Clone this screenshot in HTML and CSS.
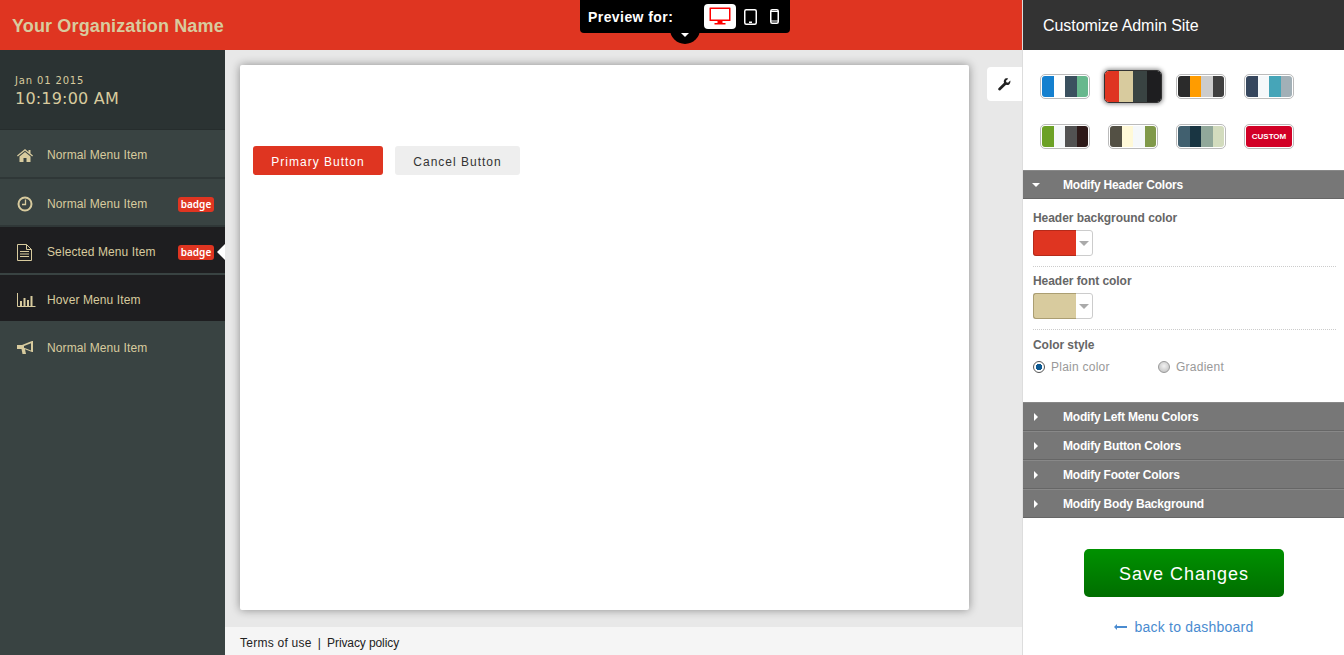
FILE: index.html
```html
<!DOCTYPE html>
<html lang="en">
<head>
<meta charset="utf-8">
<title>Customize Admin Site</title>
<link rel="stylesheet" href="styles.css">
</head>
<body>
<div class="app">
  <div class="main">
    <header class="topbar"><span class="org">Your Organization Name</span></header>
    <div class="preview">
      <span class="preview-label">Preview for:</span>
      <span class="device device-on">
        <svg width="22" height="20" viewBox="0 0 22 20"><path d="M1 1.500h20a.5.5 0 0 1 .5.5v12.500a.5.5 0 0 1-.5.5H1a.5.5 0 0 1-.5-.5V2a.5.5 0 0 1 .5-.5zM2 3v10.500h18V3z" fill="#f00" fill-rule="evenodd"/><path d="M8.500 15h5v2h3v1.500h-11V17h3z" fill="#f00"/></svg>
      </span>
      <span class="device device-tablet">
        <svg width="13" height="16" viewBox="0 0 13 16"><rect x=".75" y=".75" width="11.500" height="14.500" rx="1.500" fill="none" stroke="#fff" stroke-width="1.500"/><rect x="5" y="12.500" width="3" height="1.500" fill="#fff"/></svg>
      </span>
      <span class="device device-phone">
        <svg width="9" height="15" viewBox="0 0 9 15"><rect x=".75" y=".75" width="7.500" height="13.500" rx="1.500" fill="none" stroke="#fff" stroke-width="1.500"/><rect x="1" y="2" width="7" height="1" fill="#fff"/><rect x="1" y="11.500" width="7" height="1" fill="#fff"/></svg>
      </span>
      <span class="preview-tab"><span class="tab-caret"></span></span>
    </div>
    <div class="body-row">
      <aside class="sidebar">
        <div class="clock">
          <div class="clock-date">Jan 01 2015</div>
          <div class="clock-time">10:19:00 AM</div>
        </div>
        <nav class="menu">
          <a class="item">
            <svg class="ico" width="16" height="13" viewBox="0 0 16 13"><path d="M8 0 0 6.500l.8 1L8 1.800l7.200 5.700.8-1-2.500-2V1h-2v2z" fill="#d8cb9e"/><path d="M8 3 2.500 7.500V13H6.500V9h3v4h4V7.500z" fill="#d8cb9e"/></svg>
            <span class="label">Normal Menu Item</span>
          </a>
          <a class="item">
            <svg class="ico" width="16" height="16" viewBox="0 0 16 16"><circle cx="8" cy="8" r="6.500" fill="none" stroke="#d8cb9e" stroke-width="2"/><path d="M8.500 3.500v5H5" fill="none" stroke="#d8cb9e" stroke-width="1.300"/></svg>
            <span class="label">Normal Menu Item</span>
            <span class="badge">badge</span>
          </a>
          <a class="item item-dark item-selected">
            <svg class="ico" width="15" height="17" viewBox="0 0 15 17"><path d="M.5.500h9l5 5v11H.5z" fill="none" stroke="#d8cb9e"/><path d="M9.500.500v5h5" fill="none" stroke="#d8cb9e"/><path d="M3 7.500h9M3 10h9M3 12.500h9" stroke="#d8cb9e" stroke-width="1.200"/></svg>
            <span class="label">Selected Menu Item</span>
            <span class="badge">badge</span>
          </a>
          <a class="item item-dark">
            <svg class="ico" width="19" height="14" viewBox="0 0 19 14"><path d="M.5 0v13.500H18.500" fill="none" stroke="#d8cb9e"/><path d="M3 8h2v5H3zM6.500 5h2v8h-2zM10 7h2v6h-2zM13.500 3h2v10h-2z" fill="#d8cb9e"/></svg>
            <span class="label">Hover Menu Item</span>
          </a>
          <a class="item item-last">
            <svg class="ico" width="17" height="14" viewBox="0 0 17 14"><path d="M0 4h5l10-4h1v11h-1L8 8.300l1 4.700H5.500L4.500 8H0z" fill="#d8cb9e"/><path d="M14 2.200 7 5v1.800l7 2.600z" fill="#394342"/></svg>
            <span class="label">Normal Menu Item</span>
          </a>
        </nav>
      </aside>
      <main class="content">
        <div class="content-row">
          <section class="page">
            <button class="btn btn-primary">Primary Button</button>
            <button class="btn btn-cancel">Cancel Button</button>
          </section>
          <div class="wrench">
            <svg width="13" height="13" viewBox="0 0 14 14"><path d="M13.200 2.800 10.800 5 9 4.600 8.600 3 11 .7C9.300 0 7.700.500 7 1.500 6.200 2.500 6 3.800 6.500 5L.8 10.800c-.8.800-.8 1.500-.2 2.200.7.600 1.500.600 2.200-.1L8.700 7.300c1.200.4 2.500.2 3.600-.7 1-1 1.300-2.500.9-3.800z" fill="#222"/></svg>
          </div>
        </div>
        <footer class="footer"><a class="foot-link">Terms of use</a><span class="foot-sep">|</span><a class="foot-link foot-privacy">Privacy policy</a></footer>
      </main>
    </div>
  </div>
  <aside class="panel">
    <div class="panel-head">Customize Admin Site</div>
    <div class="swatches">
      <span class="swatch"><i style="background:#1580cf"></i><i style="background:#fff"></i><i style="background:#3b515f"></i><i style="background:#67b88d"></i></span>
      <span class="swatch swatch-on"><i style="background:#df3521"></i><i style="background:#d8cb9e"></i><i style="background:#394342"></i><i style="background:#1e1e20"></i></span>
      <span class="swatch"><i style="background:#2b2b2b"></i><i style="background:#ff9c00"></i><i style="background:#cccccc"></i><i style="background:#404040"></i></span>
      <span class="swatch"><i style="background:#36475e"></i><i style="background:#f5f8fa"></i><i style="background:#46a5b8"></i><i style="background:#a2b0b7"></i></span>
      <span class="swatch"><i style="background:#6ca126"></i><i style="background:#f5f8fa"></i><i style="background:#525252"></i><i style="background:#2e1a19"></i></span>
      <span class="swatch"><i style="background:#535044"></i><i style="background:#fff9d8"></i><i style="background:#f5f8fa"></i><i style="background:#80994a"></i></span>
      <span class="swatch"><i style="background:#41606f"></i><i style="background:#193542"></i><i style="background:#91a89a"></i><i style="background:#d3dcbe"></i></span>
      <span class="swatch swatch-custom"><b class="custom-text">CUSTOM</b></span>
    </div>
    <div class="acc"><span class="caret-down"></span><span class="acc-title">Modify Header Colors</span></div>
    <div class="acc-body">
      <div class="field field-line">
        <div class="field-label">Header background color</div>
        <div class="picker"><span class="picker-color picker-red"></span><span class="picker-arrow"></span></div>
      </div>
      <div class="field field-line">
        <div class="field-label">Header font color</div>
        <div class="picker"><span class="picker-color picker-tan"></span><span class="picker-arrow"></span></div>
      </div>
      <div class="field">
        <div class="field-label">Color style</div>
        <div class="radios">
          <span class="radio-wrap radio-first"><span class="radio radio-on"></span>Plain color</span>
          <span class="radio-wrap"><span class="radio"></span>Gradient</span>
        </div>
      </div>
    </div>
    <div class="acc"><span class="caret-right"></span><span class="acc-title">Modify Left Menu Colors</span></div>
    <div class="acc"><span class="caret-right"></span><span class="acc-title">Modify Button Colors</span></div>
    <div class="acc"><span class="caret-right"></span><span class="acc-title">Modify Footer Colors</span></div>
    <div class="acc"><span class="caret-right"></span><span class="acc-title">Modify Body Background</span></div>
    <div class="panel-foot">
      <button class="save">Save Changes</button>
      <a class="back"><span class="back-arrow"></span>back to dashboard</a>
    </div>
  </aside>
</div>
</body>
</html>
```
FILE: styles.css
```css
* { box-sizing: border-box; }
html, body { margin: 0; height: 100%; overflow: hidden; }
body { font-family: "Liberation Sans", Arial, sans-serif; background: #fff; }
.app { display: flex; height: 655px; width: 1344px; }
.main { width: 1022px; flex: none; display: flex; flex-direction: column; position: relative; }
.topbar { height: 50px; background: #df3521; display: flex; align-items: center; padding: 2px 0 0 12px; flex: none; }
.org { font-size: 18px; font-weight: 700; color: #d8cb9e; letter-spacing: .14px; }

.preview { position: absolute; left: 580px; top: 0; width: 210px; height: 33px; background: #000; border-radius: 0 0 4px 4px; display: flex; align-items: center; padding: 0 0 0 8px; z-index: 3; }
.preview-label { color: #fff; font-size: 14px; font-weight: 700; width: 116px; letter-spacing: .43px; white-space: nowrap; }
.device { display: flex; align-items: center; justify-content: center; }
.device-on { width: 32px; height: 25px; background: #fff; border-radius: 4px; margin-top: -1px; }
.device-tablet { width: 13px; margin-left: 8px; }
.device-phone { width: 9px; margin-left: 13px; }
.preview-tab { position: absolute; left: 90px; top: 20px; width: 30px; height: 24px; background: #000; border-radius: 0 0 15px 15px; z-index: -1; }
.tab-caret { position: absolute; left: 11px; top: 13px; border: 4px solid transparent; border-top-color: #fff; border-bottom: 0; }

.body-row { flex: 1; display: flex; min-height: 0; }
.sidebar { width: 225px; background: #394342; flex: none; }
.clock { height: 80px; background: #2b3333; border-bottom: 1px solid #262d2d; padding: 25px 0 0 15px; color: #d8cb9e; font-family: "DejaVu Sans", Verdana, sans-serif; }
.clock-date { font-size: 10px; line-height: 12px; letter-spacing: .85px; }
.clock-time { font-size: 16px; line-height: 20px; margin-top: 2px; letter-spacing: .2px; }
.menu { display: flex; flex-direction: column; }
.item { height: 48px; display: flex; align-items: center; padding: 4px 11px 0 0; position: relative; border-bottom: 2px solid #2f3737; color: #d8cb9e; font-size: 12px; letter-spacing: .1px; }
.item:first-child { height: 49px; padding-top: 3px; }
.item-dark { background: #1e1e20; border-bottom-color: #394342; }
.item-last { border-bottom-color: transparent; }
.item-selected::after { content: ""; position: absolute; right: 0; top: 17px; border: 8px solid transparent; border-right-color: #fff; border-left: 0; }
.ico { position: absolute; left: 17px; }
.label { margin-left: 47px; }
.badge { margin-left: auto; margin-top: 1px; background: #df3521; color: #fff; font-family: "Noto Sans", Verdana, sans-serif; font-size: 10px; font-weight: 600; line-height: 15px; height: 15px; width: 36px; text-align: center; border-radius: 3px; letter-spacing: 0; }

.content { flex: 1; display: flex; flex-direction: column; background: #e8e8e8; min-width: 0; }
.content-row { flex: 1; display: flex; align-items: flex-start; padding: 15px 0 0 15px; }
.page { width: 729px; height: 545px; background: #fff; box-shadow: 0 0 10px rgba(0,0,0,.4); border-radius: 2px; padding: 81px 0 0 13px; display: flex; align-items: flex-start; gap: 12px; flex: none; }
.btn { height: 29px; border: 0; border-radius: 3px; font-family: "Liberation Sans", Arial, sans-serif; font-size: 12px; letter-spacing: 1px; padding: 2px 0 0; }
.btn-primary { width: 130px; background: #df3521; color: #fff; }
.btn-cancel { width: 125px; background: #eeeeee; color: #333; }
.wrench { margin: 2px 0 0 18px; width: 35px; height: 34px; background: #fff; border-radius: 4px 0 0 4px; display: flex; align-items: center; justify-content: center; flex: none; padding-right: 1px; }
.footer { height: 28px; background: #f5f5f5; padding: 3px 0 0 15px; display: flex; align-items: center; font-size: 12px; color: #222; letter-spacing: .25px; flex: none; }
.foot-sep { margin: 0 6px; }
.foot-privacy { letter-spacing: -.1px; }

.panel { flex: 1; border-left: 1px solid #ddd; display: flex; flex-direction: column; background: #fff; }
.panel-head { height: 50px; background: #333; color: #fff; font-size: 16px; display: flex; align-items: center; padding: 2px 0 0 20px; flex: none; letter-spacing: -.05px; }
.swatches { height: 120px; padding: 24px 0 0 17px; display: grid; grid-template-columns: repeat(4, 50px); grid-auto-rows: 25px; column-gap: 18px; row-gap: 25px; flex: none; }
.swatch { display: flex; height: 25px; border: 1px solid #bbb; border-radius: 5px; overflow: hidden; background: #fff; padding: 1px; }
.swatch i { flex: 1; display: block; }
.swatch i:first-child { border-radius: 3px 0 0 3px; }
.swatch i:last-child { border-radius: 0 3px 3px 0; }
.swatch-on { width: 58px; height: 33px; margin: -4px 0 0 -4px; padding: 0; border: 1px solid #333; box-shadow: 0 0 4px 1px rgba(0,0,0,.45); }
.swatch-custom { align-items: stretch; }
.custom-text { flex: 1; background: #d20026; color: #fff; font-size: 8px; font-weight: 700; border-radius: 3px; display: flex; align-items: center; justify-content: center; }
.acc { height: 29px; background: #777; border-bottom: 1px solid #666; border-top: 1px solid #888; display: grid; grid-template-columns: 40px 1fr; align-items: center; color: #fff; font-size: 12px; font-weight: 700; flex: none; letter-spacing: -.2px; }
.caret-down { justify-self: start; margin-left: 9px; width: 8px; height: 0; border: 4px solid transparent; border-top-color: #fff; border-bottom: 0; }
.caret-right { justify-self: start; margin-left: 11px; height: 8px; width: 0; border: 4px solid transparent; border-left-color: #fff; border-right: 0; }
.acc-body { height: 203px; padding: 12px 8px 0 10px; flex: none; }
.field-label { font-size: 12px; font-weight: 700; color: #666; line-height: 14px; letter-spacing: -.05px; }
.field-line { height: 56px; border-bottom: 1px dotted #ccc; margin-bottom: 7px; }
.field-line + .field-line { margin-bottom: 8px; }
.picker { display: flex; width: 60px; height: 26px; border: 1px solid #ccc; border-radius: 3px; margin-top: 5px; }
.picker-color { width: 43px; margin: -1px 0 -1px -1px; border-radius: 3px 0 0 3px; border: 1px solid; border-right: 0; }
.picker-red { background: #df3521; border-color: #b52a1a; }
.picker-tan { background: #d8cb9e; border-color: #ab9e72; }
.picker-arrow { flex: 1; position: relative; }
.picker-arrow::after { content: ""; position: absolute; left: 3px; top: 10px; border: 5px solid transparent; border-top-color: #aaa; border-bottom: 0; }
.radios { display: flex; margin-top: 8px; font-size: 12px; color: #999; letter-spacing: .25px; }
.radio-wrap { display: flex; align-items: center; }
.radio-first { width: 125px; }
.radio { width: 12px; height: 12px; border-radius: 50%; border: 1px solid #999; background: radial-gradient(circle at 50% 40%, #f2f2f2, #bbb); margin-right: 6px; }
.radio-on { background: radial-gradient(circle, #0e5a92 0 3px, #fff 3.5px); border-color: #555; }
.panel-foot { flex: 1; display: flex; flex-direction: column; align-items: center; padding: 31px 0 0 1px; }
.save { width: 200px; height: 48px; border: 0; border-radius: 5px; background: linear-gradient(#009100, #006e00); color: #fff; font-family: "Liberation Sans", Arial, sans-serif; font-size: 18px; letter-spacing: 1px; padding: 2px 0 0; flex: none; }
.back { margin-top: 22px; font-size: 14px; letter-spacing: .22px; color: #4a8bd0; display: flex; align-items: center; }
.back-arrow { width: 12px; height: 2px; background: #4a8bd0; margin-right: 8px; position: relative; }
.back-arrow::before { content: ""; position: absolute; left: -1px; top: -2px; border: 3px solid transparent; border-right-color: #4a8bd0; border-left: 0; }
```
